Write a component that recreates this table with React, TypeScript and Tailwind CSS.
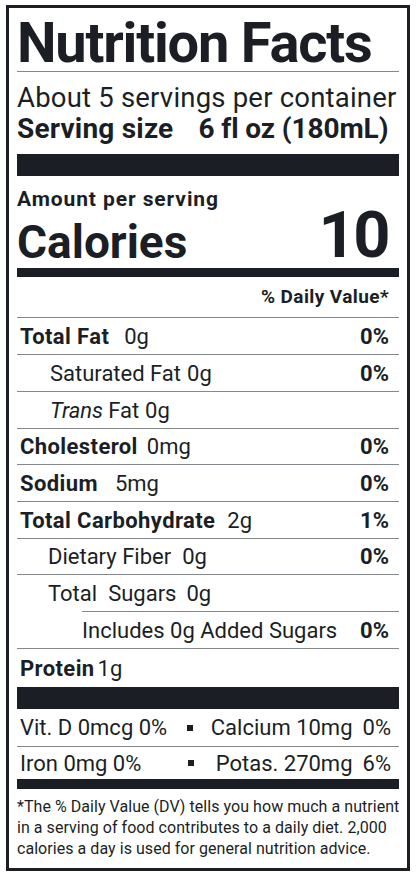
import type { ReactNode } from "react";

const font = { fontFamily: 'Roboto, "Liberation Sans", sans-serif' };

type Row = {
  label: ReactNode;
  amount?: string;
  gap?: string;
  dv?: string;
  h: string;
  indent?: string;
  line?: string;
};

const rows: Row[] = [
  { label: <b className="tracking-[0.4px]">Total Fat</b>, amount: "0g", gap: "ml-[15px]", dv: "0%", h: "h-[37px]" },
  { label: "Saturated Fat", amount: "0g", gap: "ml-[6px]", dv: "0%", indent: "pl-[33px]", h: "h-[37px]" },
  { label: <><em className="mr-[5px]">Trans</em>Fat</>, amount: "0g", gap: "ml-[6px]", indent: "pl-[33px]", h: "h-[37px]" },
  { label: <b className="tracking-[0.4px]">Cholesterol</b>, amount: "0mg", gap: "ml-[9px]", dv: "0%", h: "h-[36px]" },
  { label: <b className="tracking-[0.4px]">Sodium</b>, amount: "5mg", gap: "ml-[17px]", dv: "0%", h: "h-[37px]" },
  { label: <b className="tracking-[0.4px]">Total Carbohydrate</b>, amount: "2g", gap: "ml-[12px]", dv: "1%", h: "h-[37px]" },
  { label: "Dietary Fiber", amount: "0g", gap: "ml-[11px]", dv: "0%", indent: "pl-[31px]", h: "h-[36px]" },
  { label: <><span>Total</span><span className="ml-[11px]">Sugars</span></>, amount: "0g", gap: "ml-[10px]", indent: "pl-[31px]", line: "ml-[65px]", h: "h-[37px]" },
  { label: "Includes 0g Added Sugars", dv: "0%", indent: "pl-[65px]", h: "h-[37px]" },
];

export default function App() {
  return (
    <div className="w-[416px] h-[876px] bg-white pt-[5px] pl-[6px] text-[#1b1f25]" style={font}>
      <div className="w-[404px] h-[866px] border-[3px] border-[#1b1f25] px-[8px] flex flex-col">
        {/* title */}
        <div className="h-[64px] shrink-0 flex items-end border-b border-[#85888d]">
          <h1 className="text-[56px] font-bold leading-none tracking-[-1.2px] whitespace-nowrap">Nutrition Facts</h1>
        </div>

        {/* servings */}
        <div className="h-[82px] shrink-0 pt-[10px] whitespace-nowrap">
          <p className="text-[27.5px] leading-[31px] tracking-[0.2px]">About 5 servings per container</p>
          <p className="text-[28px] leading-[31px] font-bold flex">
            <span className="tracking-[0.2px]">Serving size</span>
            <span className="ml-[25px] tracking-[-0.1px]">6 fl oz (180mL)</span>
          </p>
        </div>
        <div className="h-[22px] shrink-0 bg-[#1b1f25]" />

        {/* calories */}
        <div className="h-[92px] shrink-0 flex flex-col">
          <p className="text-[21px] font-bold leading-none tracking-[0.9px] mt-[13px]">Amount per serving</p>
          <div className="flex items-end justify-between -mt-[7px] pr-[11px]">
            <span className="text-[46px] font-bold leading-none pb-[3px]">Calories</span>
            <span className="text-[65px] font-bold leading-none tracking-[-2.5px]">10</span>
          </div>
        </div>
        <div className="h-[9px] shrink-0 bg-[#1b1f25]" />

        <div className="h-[41px] shrink-0 flex items-center justify-end pr-[10px] border-b border-[#85888d]">
          <span className="text-[19px] font-bold tracking-[0.4px]">% Daily Value*</span>
        </div>

        {rows.map((r, i) => (
          <div key={i} className={`${r.h} shrink-0 flex flex-col`}>
            <div className={`flex-1 flex items-center justify-between pr-[10px] ${r.indent ?? "pl-[3px]"}`}>
              <span className="text-[22px] flex">
                {r.label}
                {r.amount && <span className={r.gap}>{r.amount}</span>}
              </span>
              {r.dv && <span className="text-[22px] font-bold">{r.dv}</span>}
            </div>
            <div className={`h-px bg-[#85888d] ${r.line ?? ""}`} />
          </div>
        ))}

        <div className="h-[38px] shrink-0 flex items-center pl-[3px]">
          <span className="text-[22px] flex">
            <b className="tracking-[0.4px]">Protein</b>
            <span className="ml-[3px]">1g</span>
          </span>
        </div>
        <div className="h-[22px] shrink-0 bg-[#1b1f25]" />

        {/* vitamins and minerals */}
        <div className="text-[22px] shrink-0">
          <div className="h-[38px] flex items-center border-b border-[#85888d] pl-[3px] pr-[8px]">
            <span className="w-[167px]">Vit. D 0mcg 0%</span>
            <span className="w-[6px] h-[6px] bg-[#1b1f25]" />
            <span className="flex-1 text-right">Calcium 10mg</span>
            <span className="ml-[10px]">0%</span>
          </div>
          <div className="h-[32px] flex items-center pl-[3px] pr-[8px]">
            <span className="w-[168px]">Iron 0mg 0%</span>
            <span className="w-[6px] h-[6px] bg-[#1b1f25]" />
            <span className="flex-1 text-right">Potas. 270mg</span>
            <span className="ml-[10px]">6%</span>
          </div>
        </div>
        <div className="h-[10px] shrink-0 bg-[#1b1f25]" />

        <p className="text-[16px] leading-[21px] tracking-[0.05px] mt-[7px] whitespace-nowrap">
          *The % Daily Value (DV) tells you how much a nutrient<br />
          in a serving of food contributes to a daily diet. 2,000<br />
          calories a day is used for general nutrition advice.
        </p>
      </div>
    </div>
  );
}
